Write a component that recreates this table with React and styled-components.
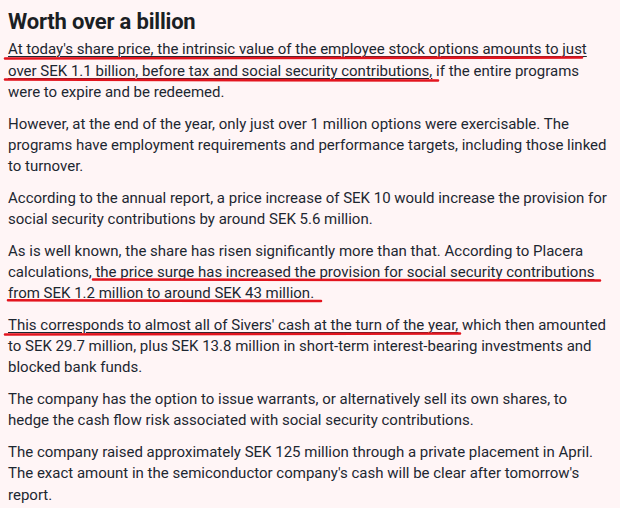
import styled, { createGlobalStyle } from "styled-components";

const Global = createGlobalStyle`
  html, body {
    margin: 0;
    padding: 0;
    background: #fff5f6;
  }
  body {
    font-family: Roboto, "Liberation Sans", Arial, sans-serif;
    color: #1d2731;
  }
`;

const Article = styled.article`
  position: relative;
  width: 620px;
  height: 508px;
  overflow: hidden;
  box-sizing: border-box;
  padding: 9px 10px 0 8px;
`;

const Title = styled.h2`
  margin: 0 0 4.3px;
  font-size: 22px;
  line-height: 26px;
  font-weight: 700;
  letter-spacing: -0.2px;
  color: #1b1f24;
`;

const Para = styled.p`
  margin: 0 0 10.6px;
  font-size: 15px;
  line-height: 21.2px;
`;

const Marked = styled.span`
  text-decoration: underline;
  text-decoration-thickness: 1px;
  text-underline-offset: 1.5px;
`;

const Ink = styled.svg`
  position: absolute;
  left: 0;
  top: 0;
  pointer-events: none;
`;

const strokes = [
  [5, 58.5, 582, 57.5],
  [5, 79.5, 438, 80.5],
  [93, 279.5, 600, 280.5],
  [8, 300.3, 321, 301],
  [5, 334.5, 460, 333.5],
];

export default function App() {
  return (
    <>
      <Global />
      <Article>
        <Title>Worth over a billion</Title>
        <Para>
          <Marked>
            At today's share price, the intrinsic value of the employee stock
            options amounts to just over SEK 1.1 billion, before tax and social
            security contributions,
          </Marked>{" "}
          if the entire programs were to expire and be redeemed.
        </Para>
        <Para>
          However, at the end of the year, only just over 1 million options were
          exercisable. The programs have employment requirements and performance
          targets, including those linked to turnover.
        </Para>
        <Para>
          According to the annual report, a price increase of SEK 10 would
          increase the provision for social security contributions by around SEK
          5.6 million.
        </Para>
        <Para>
          As is well known, the share has risen significantly more than that.
          According to Placera calculations,{" "}
          <Marked>
            the price surge has increased the provision for social security
            contributions from SEK 1.2 million to around SEK 43 million.
          </Marked>
        </Para>
        <Para>
          <Marked>
            This corresponds to almost all of Sivers' cash at the turn of the
            year,
          </Marked>{" "}
          which then amounted to SEK 29.7 million, plus SEK 13.8 million in
          short-term interest-bearing investments and blocked bank funds.
        </Para>
        <Para>
          The company has the option to issue warrants, or alternatively sell its
          own shares, to hedge the cash flow risk associated with social security
          contributions.
        </Para>
        <Para>
          The company raised approximately SEK 125 million through a private
          placement in April. The exact amount in the semiconductor company's
          cash will be clear after tomorrow's report.
        </Para>
        <Ink width="620" height="508" viewBox="0 0 620 508">
          {strokes.map(([x1, y1, x2, y2], i) => (
            <line
              key={i}
              x1={x1}
              y1={y1}
              x2={x2}
              y2={y2}
              stroke="#e3141e"
              strokeWidth="2.6"
              strokeLinecap="round"
            />
          ))}
        </Ink>
      </Article>
    </>
  );
}
